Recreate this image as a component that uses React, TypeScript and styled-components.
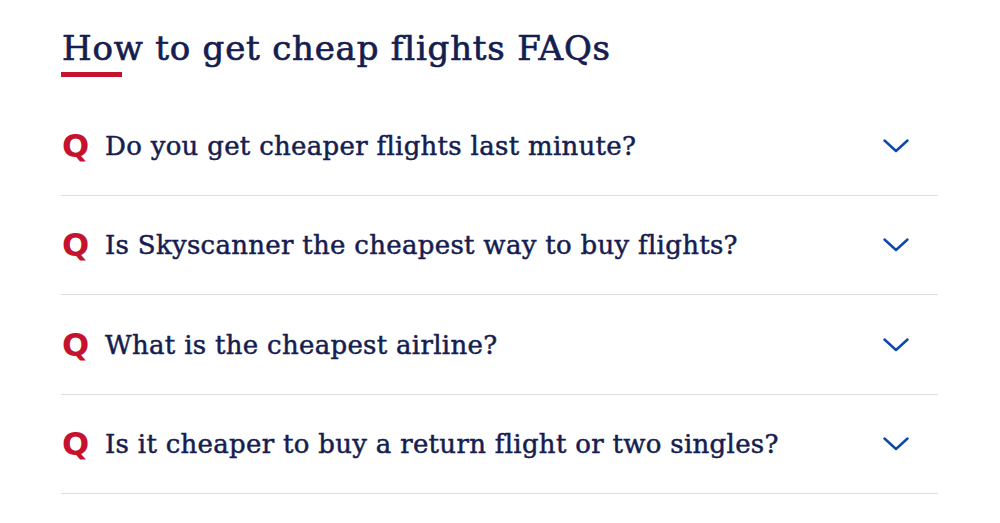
import React from "react";
import styled, { createGlobalStyle } from "styled-components";

const Global = createGlobalStyle`
  html, body { margin: 0; padding: 0; background: #ffffff; }
  body { font-family: "DejaVu Serif", serif; }
`;

const Page = styled.main`
  padding: 28px 62px 0 61px;
  width: 1000px;
  box-sizing: border-box;
`;

const Title = styled.h2`
  margin: 0;
  font-family: "DejaVu Serif", serif;
  font-weight: 400;
  font-size: 34px;
  line-height: 40px;
  color: #161d4f;
  letter-spacing: 0.8px;
  -webkit-text-stroke: 0.7px #161d4f;
  padding-left: 1px;
`;

const Underline = styled.div`
  width: 61px;
  height: 5px;
  background: #c4122f;
  margin-top: 4px;
`;

const List = styled.div`
  margin-top: 19px;
  display: flex;
  flex-direction: column;
`;

const Row = styled.div`
  display: flex;
  align-items: center;
  height: 99.5px;
  border-bottom: 1px solid #dcdce4;
  padding-left: 1px;
  padding-top: 1px;
  box-sizing: border-box;
`;

const QMark = styled.span`
  font-family: "DejaVu Sans", sans-serif;
  font-weight: 700;
  font-size: 32px;
  color: #c4122f;
  width: 43px;
  flex: none;
  line-height: 1;
`;

const Question = styled.span`
  flex: 1;
  font-family: "DejaVu Serif", serif;
  font-size: 26px;
  color: #161d4f;
  letter-spacing: 0.3px;
  -webkit-text-stroke: 0.5px #161d4f;
`;

const Chevron = styled.svg`
  width: 26px;
  height: 14px;
  margin-right: 29px;
  flex: none;
`;

const questions = [
  "Do you get cheaper flights last minute?",
  "Is Skyscanner the cheapest way to buy flights?",
  "What is the cheapest airline?",
  "Is it cheaper to buy a return flight or two singles?",
];

export default function App() {
  return (
    <>
      <Global />
      <Page>
        <Title>How to get cheap flights FAQs</Title>
        <Underline />
        <List>
          {questions.map((q) => (
            <Row key={q}>
              <QMark>Q</QMark>
              <Question>{q}</Question>
              <Chevron viewBox="0 0 26 14" fill="none">
                <polyline
                  points="1.5,1.5 13,12 24.5,1.5"
                  stroke="#0d47a8"
                  strokeWidth="2.4"
                  strokeLinecap="round"
                  strokeLinejoin="round"
                />
              </Chevron>
            </Row>
          ))}
        </List>
      </Page>
    </>
  );
}
